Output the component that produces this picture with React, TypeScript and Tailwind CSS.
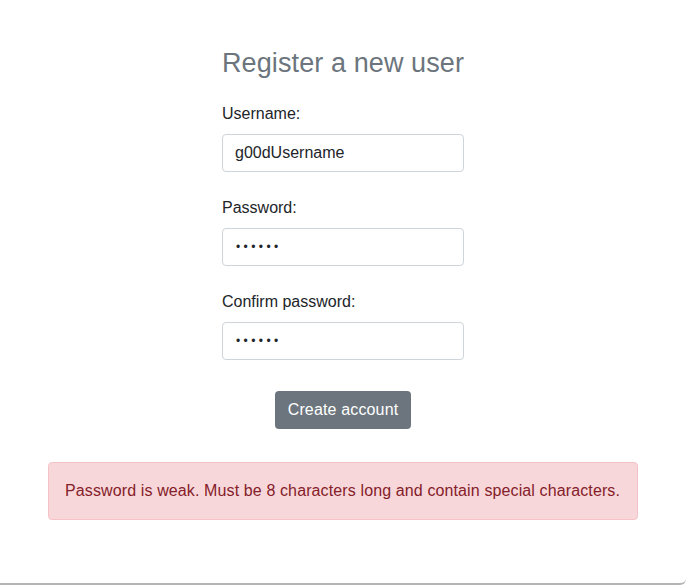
import React from "react";

const fieldClass =
  "block w-full h-[38px] rounded-[4px] border border-[#ced4da] bg-white px-3 text-base text-[#212529] outline-none";

function Field({ id, label, value, mask }: { id: string; label: string; value: string; mask?: boolean }) {
  return (
    <div className="mb-6">
      <label htmlFor={id} className="mb-2 block text-base leading-6 text-[#212529]">
        {label}
      </label>
      <input
        id={id}
        readOnly
        value={value}
        className={fieldClass + (mask ? " pl-[13px] tracking-[3.4px] text-[12px]" : "")}
      />
    </div>
  );
}

export default function App() {
  return (
    <div className="bg-white font-['Liberation_Sans',Arial,sans-serif]">
      <div className="h-[585px] rounded-br-[6px] border-b-2 border-[#b4b4b4] bg-white pt-[46px]">
        <div className="mx-auto w-[242px]">
          <h3 className="text-center text-[27px] leading-[34px] tracking-[0.1px] text-[#6c757d]">Register a new user</h3>
          <form className="mt-[22px]">
            <Field id="username" label="Username:" value="g00dUsername" />
            <Field id="password" label="Password:" value="••••••" mask />
            <Field id="confirm" label="Confirm password:" value="••••••" mask />
            <div className="flex justify-center pt-[7px]">
              <button
                type="button"
                className="h-[38px] rounded-[4px] bg-[#6c757d] px-[13px] text-base tracking-[0.15px] text-white"
              >
                Create account
              </button>
            </div>
          </form>
        </div>
        <div className="mx-[48px] mt-[33px] whitespace-nowrap rounded-[4px] border border-[#f5c2c7] bg-[#f8d7da] px-4 py-4 text-base leading-6 tracking-[0.12px] text-[#842029]">
          Password is weak. Must be 8 characters long and contain special characters.
        </div>
      </div>
    </div>
  );
}
